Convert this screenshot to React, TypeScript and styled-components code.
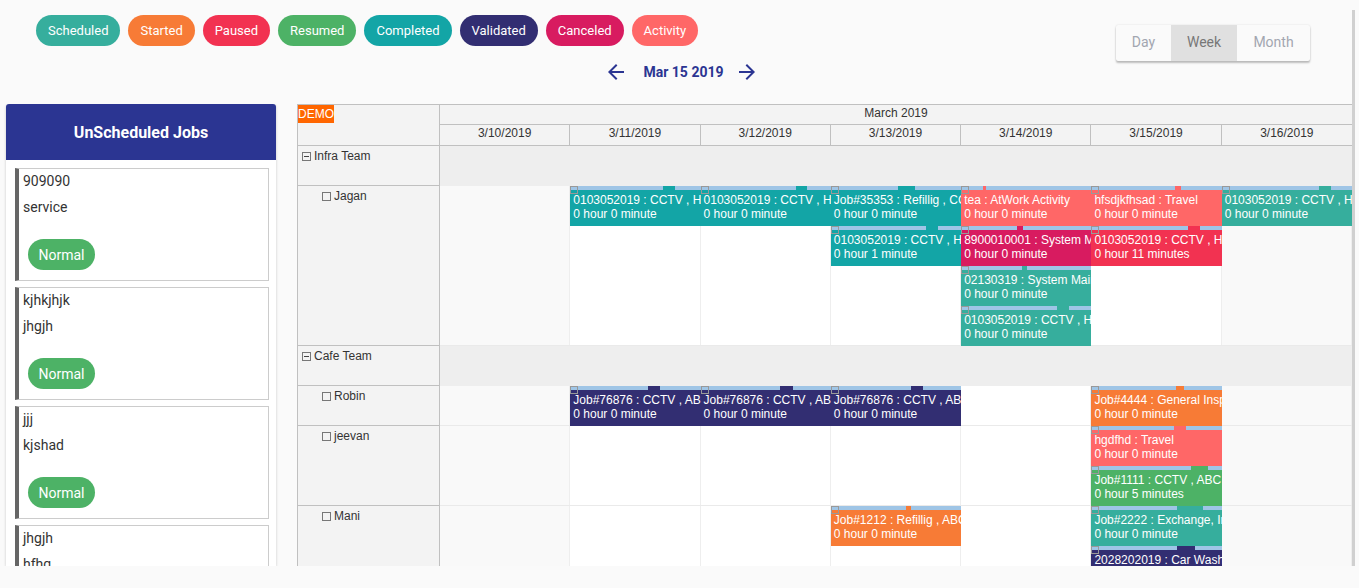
import React from 'react';
import styled, { createGlobalStyle } from 'styled-components';

const GlobalStyle = createGlobalStyle`
  html, body { margin: 0; padding: 0; background: #fafafa; }
  body { font-family: Roboto, "Liberation Sans", Arial, sans-serif; }
  *, *::before, *::after { box-sizing: border-box; }
`;

const C = {
  scheduled: '#36ae9d',
  started: '#f77b36',
  paused: '#f23251',
  resumed: '#4db266',
  completed: '#13a5a6',
  validated: '#322e72',
  canceled: '#d81b60',
  activity: '#ff6767',
};
type StatusKey = keyof typeof C;

const STATUSES: { label: string; key: StatusKey }[] = [
  { label: 'Scheduled', key: 'scheduled' },
  { label: 'Started', key: 'started' },
  { label: 'Paused', key: 'paused' },
  { label: 'Resumed', key: 'resumed' },
  { label: 'Completed', key: 'completed' },
  { label: 'Validated', key: 'validated' },
  { label: 'Canceled', key: 'canceled' },
  { label: 'Activity', key: 'activity' },
];

const Page = styled.div`
  width: 1359px;
  height: 588px;
  overflow: hidden;
  position: relative;
  background: #fafafa;
`;

const Header = styled.header`
  height: 104px;
  display: flex;
  flex-direction: column;
`;

const TopRow = styled.div`
  height: 46px;
  display: flex;
  align-items: flex-start;
  padding: 15px 49px 0 36px;
`;

const Chips = styled.div`
  display: flex;
  gap: 8px;
`;

const Chip = styled.span<{ $bg: string }>`
  height: 31px;
  padding: 0 12px;
  border-radius: 16px;
  background: ${(p) => p.$bg};
  color: #fff;
  font-size: 13px;
  display: inline-flex;
  align-items: center;
`;

const ViewToggle = styled.div`
  margin-left: auto;
  margin-top: 10px;
  display: flex;
  border-radius: 2px;
  overflow: hidden;
  background: #fafafa;
  box-shadow: 0 2px 2px rgba(0, 0, 0, 0.24), 0 0 2px rgba(0, 0, 0, 0.12);
`;

const ViewButton = styled.button<{ $active?: boolean; $w: number }>`
  width: ${(p) => p.$w}px;
  height: 36px;
  padding: 0 0 2px;
  border: none;
  display: flex;
  align-items: center;
  justify-content: center;
  font-family: Roboto, sans-serif;
  font-size: 14px;
  background: ${(p) => (p.$active ? '#e0e0e0' : 'transparent')};
  color: ${(p) => (p.$active ? '#777777' : '#a2a6b0')};
`;

const NavRow = styled.div`
  margin-top: 14px;
  height: 24px;
  display: flex;
  justify-content: center;
  align-items: center;
  padding-left: 4px;
`;

const NavDate = styled.span`
  font-size: 14px;
  font-weight: 700;
  color: #2b3592;
  margin: 0 11px 0 15px;
`;

const Main = styled.main`
  height: 462px;
  overflow: hidden;
  display: flex;
  align-items: flex-start;
  gap: 21px;
  padding-left: 6px;
`;

const Sidebar = styled.aside`
  width: 270px;
  height: 100%;
  flex: none;
  background: #fff;
  box-shadow: 0 1px 3px rgba(0, 0, 0, 0.2);
  border-radius: 3px 3px 0 0;
  display: flex;
  flex-direction: column;
`;

const SidebarTitle = styled.div`
  height: 56px;
  flex: none;
  background: #2b3592;
  color: #fff;
  font-size: 16px;
  font-weight: 700;
  display: flex;
  align-items: center;
  justify-content: center;
  border-radius: 3px 3px 0 0;
`;

const CardList = styled.div`
  display: flex;
  flex-direction: column;
  gap: 6px;
  padding: 8px 7px 0 9px;
`;

const Card = styled.div`
  height: 113px;
  flex: none;
  border: 1px solid #cccccc;
  border-left: 4px solid #666666;
  padding: 0 0 0 4px;
  display: flex;
  flex-direction: column;
  align-items: flex-start;
`;

const CardTitle = styled.div`
  margin-top: 3px;
  font-size: 14px;
  line-height: 18px;
  color: #333;
`;

const CardSub = styled.div`
  margin-top: 8px;
  font-size: 14px;
  line-height: 18px;
  color: #333;
`;

const Priority = styled.span`
  margin: 23px 0 0 5px;
  height: 31px;
  width: 67px;
  justify-content: center;
  border-radius: 16px;
  background: #4db266;
  color: #fff;
  font-size: 14px;
  display: inline-flex;
  align-items: center;
`;

const Scheduler = styled.section`
  width: 1056px;
  flex: none;
  border: 1px solid #c0c0c0;
  background: #fff;
  font-family: "Liberation Sans", Arial, sans-serif;
  font-size: 12px;
  color: #333;
`;

const Row = styled.div<{ $h: number }>`
  display: grid;
  grid-template-columns: 142px 912px;
  height: ${(p) => p.$h}px;
`;

const Corner = styled.div`
  background: #f3f3f3;
  border-right: 1px solid #c0c0c0;
  border-bottom: 1px solid #c0c0c0;
`;

const DemoBadge = styled.span`
  display: inline-block;
  background: #ff6600;
  color: #fff;
  font-size: 12px;
  line-height: 18px;
  padding: 0;
`;

const TimeHeader = styled.div`
  background: #f3f3f3;
  display: grid;
  grid-template-rows: 20px 21px;
`;

const MonthCell = styled.div`
  border-bottom: 1px solid #c0c0c0;
  text-align: center;
  line-height: 17px;
`;

const DatesRow = styled.div`
  display: grid;
  grid-template-columns: repeat(7, 1fr);
`;

const DateCell = styled.div`
  border-bottom: 1px solid #c0c0c0;
  border-right: 1px solid #c0c0c0;
  text-align: center;
  line-height: 16px;
  &:last-child { border-right: none; }
`;

const ResourceCell = styled.div<{ $indent: number }>`
  background: #f3f3f3;
  border-right: 1px solid #c0c0c0;
  border-bottom: 1px solid #c0c0c0;
  padding: 3px 0 0 ${(p) => p.$indent}px;
  display: flex;
  align-items: flex-start;
  gap: 3px;
  line-height: 15px;
  color: #333;
`;

const TreeBox = styled.span<{ $minus?: boolean }>`
  width: 9px;
  height: 9px;
  margin-top: 3px;
  border: 1px solid #777;
  position: relative;
  flex: none;
  &::after {
    content: '';
    display: ${(p) => (p.$minus ? 'block' : 'none')};
    position: absolute;
    left: 1px;
    right: 1px;
    top: 3px;
    height: 1px;
    background: #444;
  }
`;

const Timeline = styled.div<{ $group?: boolean }>`
  position: relative;
  display: grid;
  grid-template-columns: repeat(7, 1fr);
  background: ${(p) => (p.$group ? '#eeeeee' : '#fff')};
  border-bottom: 1px solid ${(p) => (p.$group ? '#eeeeee' : '#eaeaea')};
`;

const DayCell = styled.div<{ $weekend?: boolean }>`
  background: ${(p) => (p.$weekend ? '#f9f9f9' : '#ffffff')};
  border-right: 1px solid #eeeeee;
  &:last-child { border-right: none; }
`;

const Event = styled.div`
  position: absolute;
  height: 40px;
  display: flex;
  flex-direction: column;
  overflow: hidden;
`;

const EventBar = styled.div`
  height: 4px;
  flex: none;
  background: #9fc5e6;
  position: relative;
`;

const EventBarFill = styled.div<{ $bg: string }>`
  position: absolute;
  top: 0;
  bottom: 0;
  background: ${(p) => p.$bg};
`;

const EventHandle = styled.span`
  position: absolute;
  left: 0;
  top: 0;
  width: 8px;
  height: 8px;
  border: 1px solid #999;
  z-index: 1;
`;

const EventBody = styled.div<{ $bg: string }>`
  flex: 1;
  background: ${(p) => p.$bg};
  color: #fff;
  padding: 3px 3px 0;
  line-height: 14px;
  white-space: nowrap;
  overflow: hidden;
`;

const ScrollTrack = styled.div`
  position: absolute;
  right: 4px;
  top: 10px;
  bottom: 22px;
  width: 3px;
  background: #d0d0d0;
`;

type Ev = { col: number; lane: number; c: StatusKey; t: string; d?: string; f: [number, number] };
type Res =
  | { type: 'group'; name: string; h: number }
  | { type: 'res'; name: string; h: number; events: Ev[] };

const D0 = '0 hour 0 minute';

const RESOURCES: Res[] = [
  { type: 'group', name: 'Infra Team', h: 40 },
  {
    type: 'res',
    name: 'Jagan',
    h: 160,
    events: [
      { col: 1, lane: 0, c: 'completed', t: '0103052019 : CCTV , HVAC', f: [93, 12] },
      { col: 2, lane: 0, c: 'completed', t: '0103052019 : CCTV , HVAC', f: [95, 11] },
      { col: 3, lane: 0, c: 'completed', t: 'Job#35353 : Refillig , CCTV', f: [67, 17] },
      { col: 4, lane: 0, c: 'activity', t: 'tea : AtWork Activity', f: [22, 3] },
      { col: 5, lane: 0, c: 'activity', t: 'hfsdjkfhsad : Travel', f: [84, 6] },
      { col: 6, lane: 0, c: 'scheduled', t: '0103052019 : CCTV , HVAC', f: [97, 12] },
      { col: 3, lane: 1, c: 'completed', t: '0103052019 : CCTV , HVAC', d: '0 hour 1 minute', f: [95, 12] },
      { col: 4, lane: 1, c: 'canceled', t: '8900010001 : System Maintenance', f: [56, 6] },
      { col: 5, lane: 1, c: 'paused', t: '0103052019 : CCTV , HVAC', d: '0 hour 11 minutes', f: [97, 12] },
      { col: 4, lane: 2, c: 'scheduled', t: '02130319 : System Maintenance', f: [61, 5] },
      { col: 4, lane: 3, c: 'scheduled', t: '0103052019 : CCTV , HVAC', f: [96, 12] },
    ],
  },
  { type: 'group', name: 'Cafe Team', h: 40 },
  {
    type: 'res',
    name: 'Robin',
    h: 40,
    events: [
      { col: 1, lane: 0, c: 'validated', t: 'Job#76876 : CCTV , ABC', f: [78, 12] },
      { col: 2, lane: 0, c: 'validated', t: 'Job#76876 : CCTV , ABC', f: [79, 13] },
      { col: 3, lane: 0, c: 'validated', t: 'Job#76876 : CCTV , ABC', f: [80, 12] },
      { col: 5, lane: 0, c: 'started', t: 'Job#4444 : General Inspection', f: [85, 8] },
    ],
  },
  {
    type: 'res',
    name: 'jeevan',
    h: 80,
    events: [
      { col: 5, lane: 0, c: 'activity', t: 'hgdfhd : Travel', f: [83, 12] },
      { col: 5, lane: 1, c: 'resumed', t: 'Job#1111 : CCTV , ABC', d: '0 hour 5 minutes', f: [100, 17] },
    ],
  },
  {
    type: 'res',
    name: 'Mani',
    h: 80,
    events: [
      { col: 3, lane: 0, c: 'started', t: 'Job#1212 : Refillig , ABC', f: [75, 5] },
      { col: 5, lane: 0, c: 'scheduled', t: 'Job#2222 : Exchange, Inspection', f: [86, 26] },
      { col: 5, lane: 1, c: 'validated', t: '2028202019 : Car Wash', f: [86, 18] },
    ],
  },
];

const DATES = ['3/10/2019', '3/11/2019', '3/12/2019', '3/13/2019', '3/14/2019', '3/15/2019', '3/16/2019'];

const CARDS = [
  { title: '909090', sub: 'service' },
  { title: 'kjhkjhjk', sub: 'jhgjh' },
  { title: 'jjj', sub: 'kjshad' },
  { title: 'jhgjh', sub: 'hfhg' },
];

const COL_W = 912 / 7;

const Arrow = ({ dir }: { dir: 'left' | 'right' }) => (
  <svg width="24" height="24" viewBox="0 0 24 24" style={{ transform: dir === 'right' ? 'scaleX(-1)' : undefined }}>
    <path fill="#2b3592" d="M20 11H7.83l5.59-5.59L12 4l-8 8 8 8 1.41-1.41L7.83 13H20v-2z" />
  </svg>
);

export default function App() {
  return (
    <Page>
      <GlobalStyle />
      <Header>
        <TopRow>
          <Chips>
            {STATUSES.map((s) => (
              <Chip key={s.key} $bg={C[s.key]}>
                {s.label}
              </Chip>
            ))}
          </Chips>
          <ViewToggle>
            <ViewButton $w={55}>Day</ViewButton>
            <ViewButton $w={66} $active>Week</ViewButton>
            <ViewButton $w={73}>Month</ViewButton>
          </ViewToggle>
        </TopRow>
        <NavRow>
          <Arrow dir="left" />
          <NavDate>Mar 15 2019</NavDate>
          <Arrow dir="right" />
        </NavRow>
      </Header>
      <Main>
        <Sidebar>
          <SidebarTitle>UnScheduled Jobs</SidebarTitle>
          <CardList>
            {CARDS.map((c, i) => (
              <Card key={i}>
                <CardTitle>{c.title}</CardTitle>
                <CardSub>{c.sub}</CardSub>
                <Priority>Normal</Priority>
              </Card>
            ))}
          </CardList>
        </Sidebar>
        <Scheduler>
          <Row $h={41}>
            <Corner>
              <DemoBadge>DEMO</DemoBadge>
            </Corner>
            <TimeHeader>
              <MonthCell>March 2019</MonthCell>
              <DatesRow>
                {DATES.map((d) => (
                  <DateCell key={d}>{d}</DateCell>
                ))}
              </DatesRow>
            </TimeHeader>
          </Row>
          {RESOURCES.map((r) => (
            <Row key={r.name} $h={r.h}>
              <ResourceCell $indent={r.type === 'group' ? 4 : 24}>
                <TreeBox $minus={r.type === 'group'} />
                <span>{r.name}</span>
              </ResourceCell>
              <Timeline $group={r.type === 'group'}>
                {r.type === 'res' &&
                  DATES.map((d, i) => <DayCell key={d} $weekend={i === 0 || i === 6} />)}
                {r.type === 'res' &&
                  r.events.map((e, i) => (
                    <Event key={i} style={{ left: e.col * COL_W, top: e.lane * 40, width: COL_W }}>
                      <EventHandle />
                      <EventBar>
                        <EventBarFill $bg={C[e.c]} style={{ left: e.f[0], width: e.f[1] }} />
                      </EventBar>
                      <EventBody $bg={C[e.c]}>
                        <div>{e.t}</div>
                        <div>{e.d ?? D0}</div>
                      </EventBody>
                    </Event>
                  ))}
              </Timeline>
            </Row>
          ))}
        </Scheduler>
      </Main>
      <ScrollTrack />
    </Page>
  );
}
